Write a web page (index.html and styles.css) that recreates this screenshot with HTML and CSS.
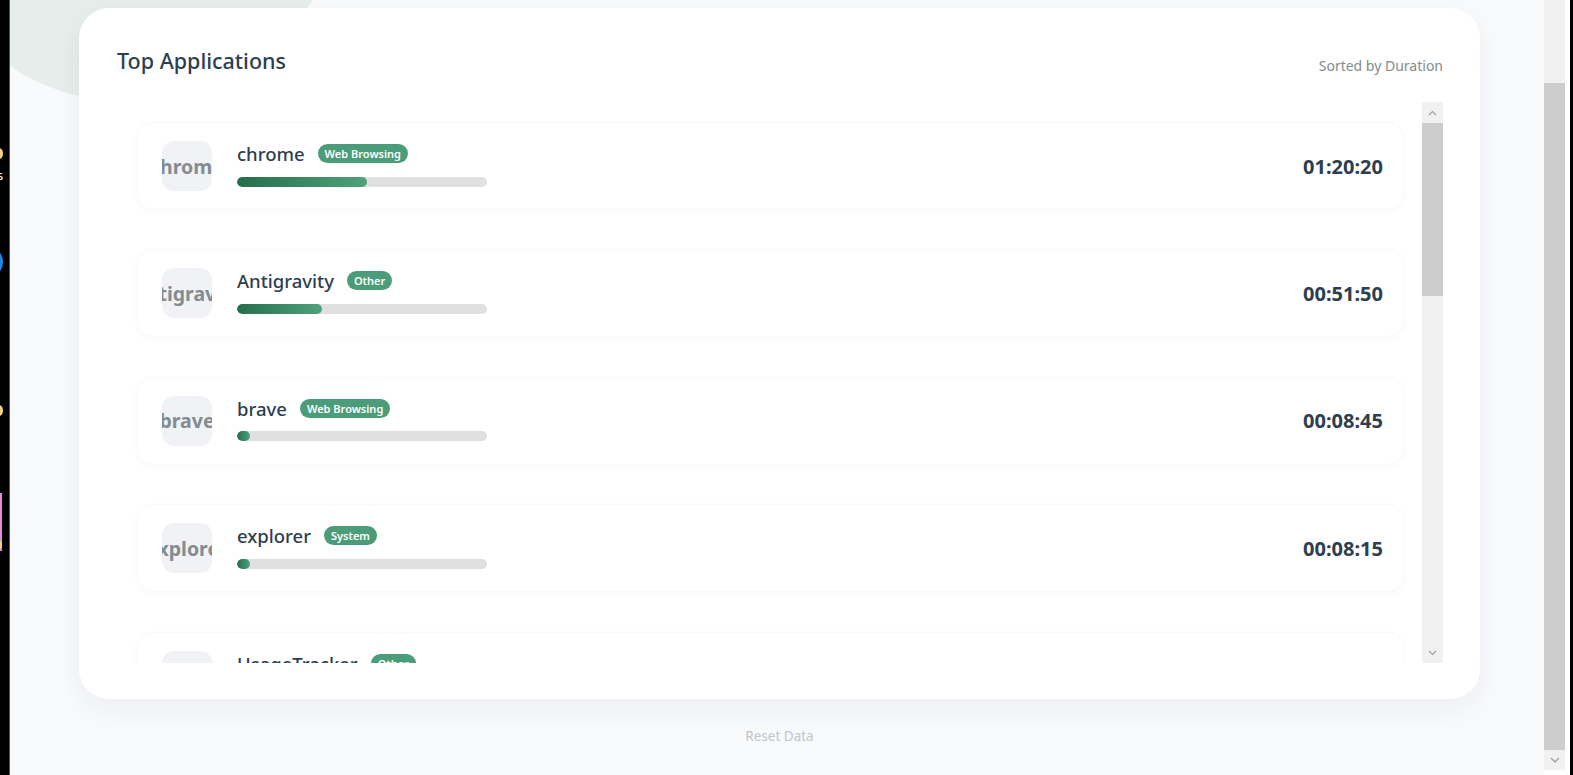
FILE: index.html
```html
<!DOCTYPE html>
<html lang="en">
<head>
<meta charset="utf-8">
<title>Top Applications</title>
<link rel="stylesheet" href="styles.css">
</head>
<body>
<div class="frame">
  <div class="left-strip">
    <span class="bit bit-yellow1"></span>
    <span class="bit-text">s</span>
    <span class="bit bit-blue"></span>
    <span class="bit bit-yellow2"></span>
    <span class="bit bit-pink"></span>
    <span class="bit bit-yellow3"></span>
  </div>
  <main class="page">
    <div class="blob"></div>
    <section class="card">
      <header class="card-head">
        <h2 class="card-title">Top Applications</h2>
        <span class="sort-label">Sorted by Duration</span>
      </header>
      <div class="list-wrap">
        <div class="list">
          <div class="app">
            <div class="app-icon"><span>chrome</span></div>
            <div class="app-info">
              <div class="app-row"><span class="app-name">chrome</span><span class="tag">Web Browsing</span></div>
              <div class="bar"><div class="bar-fill" style="width:52%"></div></div>
            </div>
            <div class="app-time">01:20:20</div>
          </div>
          <div class="app">
            <div class="app-icon"><span>Antigravity</span></div>
            <div class="app-info">
              <div class="app-row"><span class="app-name">Antigravity</span><span class="tag">Other</span></div>
              <div class="bar"><div class="bar-fill" style="width:34%"></div></div>
            </div>
            <div class="app-time">00:51:50</div>
          </div>
          <div class="app">
            <div class="app-icon"><span>brave</span></div>
            <div class="app-info">
              <div class="app-row"><span class="app-name">brave</span><span class="tag">Web Browsing</span></div>
              <div class="bar"><div class="bar-fill" style="width:5%"></div></div>
            </div>
            <div class="app-time">00:08:45</div>
          </div>
          <div class="app">
            <div class="app-icon"><span>explorer</span></div>
            <div class="app-info">
              <div class="app-row"><span class="app-name">explorer</span><span class="tag">System</span></div>
              <div class="bar"><div class="bar-fill" style="width:5%"></div></div>
            </div>
            <div class="app-time">00:08:15</div>
          </div>
          <div class="app">
            <div class="app-icon"><span>UsageTracker</span></div>
            <div class="app-info">
              <div class="app-row"><span class="app-name">UsageTracker</span><span class="tag">Other</span></div>
              <div class="bar"><div class="bar-fill" style="width:3%"></div></div>
            </div>
            <div class="app-time">00:05:10</div>
          </div>
        </div>
        <div class="vscroll">
          <div class="sb-arrow"><svg width="9" height="6" viewBox="0 0 9 6"><polyline points="1,5 4.5,1.5 8,5" fill="none" stroke="#a0a0a0" stroke-width="1.2"/></svg></div>
          <div class="sb-thumb"></div>
          <div class="sb-track"></div>
          <div class="sb-arrow"><svg width="9" height="6" viewBox="0 0 9 6"><polyline points="1,1 4.5,4.5 8,1" fill="none" stroke="#a0a0a0" stroke-width="1.2"/></svg></div>
        </div>
      </div>
    </section>
    <div class="reset">Reset Data</div>
  </main>
  <div class="win-scroll">
    <div class="ws-track"></div>
    <div class="ws-thumb"></div>
    <div class="ws-arrow"><svg width="10" height="6" viewBox="0 0 10 6"><polyline points="1,1 5,5 9,1" fill="none" stroke="#a0a0a0" stroke-width="1.3"/></svg></div>
    <div class="ws-end"></div>
  </div>
  <div class="right-edge"></div>
</div>
</body>
</html>
```

FILE: styles.css
```css
* { box-sizing: border-box; }
html, body { margin: 0; padding: 0; }
body {
  width: 1573px;
  height: 775px;
  overflow: hidden;
  font-family: "Noto Sans", "Open Sans", "Liberation Sans", sans-serif;
  background: #000;
}
.frame {
  display: flex;
  height: 775px;
  width: 1573px;
}
.left-strip {
  width: 10px;
  flex: none;
  background: #000;
  border-right: 1px solid #4b5361;
  position: relative;
  overflow: hidden;
}
.bit { position: absolute; display: block; }
.bit-yellow1 { left: -5px; top: 148px; width: 8px; height: 11px; border-radius: 50%; background: #f2d27a; }
.bit-text { position: absolute; left: -3px; top: 167px; color: #fff; font-size: 13px; line-height: 16px; }
.bit-blue { left: -14px; top: 250px; width: 17px; height: 24px; border-radius: 50%; background: #1e88e5; }
.bit-yellow2 { left: -5px; top: 405px; width: 8px; height: 11px; border-radius: 50%; background: #f2d27a; }
.bit-pink { left: 0; top: 493px; width: 2px; height: 58px; background: #e58bd6; }
.bit-yellow3 { left: -4px; top: 540px; width: 6px; height: 9px; border-radius: 50%; background: #f2d27a; }

.page {
  flex: none;
  width: 1534px;
  height: 775px;
  background: #f8fafc;
  position: relative;
  overflow: hidden;
  padding-top: 8px;
}
.blob {
  position: absolute;
  left: -97px;
  top: -330px;
  width: 432px;
  height: 432px;
  border-radius: 50%;
  background: #e5eeea;
}
.card {
  position: relative;
  margin-left: 69px;
  width: 1401px;
  height: 691px;
  background: #fff;
  border-radius: 30px;
  box-shadow: 0 10px 30px rgba(30, 41, 59, 0.06);
  padding: 38px 37px 36px 38px;
}
.card-head {
  display: flex;
  justify-content: space-between;
  align-items: flex-start;
  height: 30px;
  margin-bottom: 26px;
}
.card-title {
  margin: 0;
  font-size: 21.5px;
  line-height: 30px;
  font-weight: 500;
  color: #2c3e50;
}
.sort-label {
  margin-top: 10px;
  font-size: 14px;
  line-height: 20px;
  color: #7f8c8d;
}
.list-wrap {
  display: flex;
  height: 561px;
}
.list {
  flex: 1;
  overflow: hidden;
  padding: 20px 18px 0 20px;
}
.app {
  display: flex;
  align-items: center;
  height: 88px;
  padding: 0 20px 0 24px;
  margin-bottom: 39.4px;
  border-radius: 16px;
  border: 1px solid #f8f9fa;
  box-shadow: 0 2px 8px rgba(0, 0, 0, 0.025);
  background: #fff;
}
.app-icon {
  flex: none;
  width: 50px;
  height: 50px;
  border-radius: 12px;
  background: #f0f2f5;
  display: flex;
  align-items: center;
  justify-content: center;
  overflow: hidden;
  margin-right: 25px;
  font-size: 19.5px;
  font-weight: 700;
  color: #838c8f;
  white-space: nowrap;
}
.app-icon span { flex: none; }
.app-info {
  width: 250px;
  padding-bottom: 4px;
}
.app-row {
  display: flex;
  align-items: center;
  height: 24px;
}
.app-name {
  font-size: 18.5px;
  font-weight: 500;
  color: #2c3e50;
}
.tag {
  margin-left: 13px;
  height: 19px;
  line-height: 19px;
  padding: 0 7px;
  border-radius: 10px;
  background: #4b9c78;
  color: #fff;
  font-size: 11px;
  font-weight: 600;
}
.bar {
  margin-top: 11px;
  height: 10px;
  border-radius: 5px;
  background: #e0e0e0;
  overflow: hidden;
}
.bar-fill {
  height: 100%;
  min-width: 12px;
  border-radius: 5px;
  background: linear-gradient(90deg, #256e4c, #4fa27b);
}
.app-time {
  margin-left: auto;
  font-size: 20px;
  font-weight: 700;
  color: #2c3e50;
}
.vscroll {
  flex: none;
  width: 21px;
  display: flex;
  flex-direction: column;
  background: #f1f1f1;
}
.sb-arrow {
  height: 21px;
  display: flex;
  align-items: center;
  justify-content: center;
  background: #f1f1f1;
}
.sb-thumb {
  height: 173px;
  background: #cdcdcd;
}
.sb-track { flex: 1; }
.reset {
  margin-left: 69px;
  width: 1401px;
  margin-top: 27px;
  text-align: center;
  font-size: 13.5px;
  line-height: 20px;
  color: #c1c5c9;
}
.win-scroll {
  flex: none;
  width: 21px;
  display: flex;
  flex-direction: column;
  background: #f1f1f1;
}
.ws-track { height: 83px; }
.ws-thumb { height: 667px; background: #cdcdcd; }
.ws-arrow {
  height: 20px;
  display: flex;
  align-items: center;
  justify-content: center;
}
.ws-end { flex: 1; background: #fff; }
.right-edge {
  flex: none;
  width: 8px;
  background: #fff;
  border-right: 3px solid #000;
}
```
